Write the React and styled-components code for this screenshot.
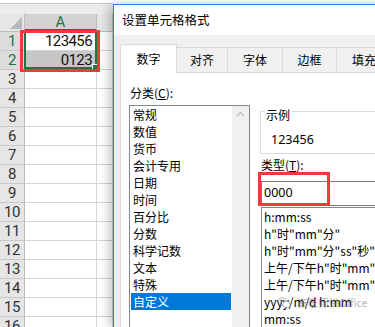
import React from 'react';
import styled, { createGlobalStyle } from 'styled-components';

const GlobalStyle = createGlobalStyle`
  html, body {
    margin: 0;
    padding: 0;
    background: #fff;
  }
  body {
    font-family: "Noto Sans CJK SC", "Noto Sans", sans-serif;
    color: #000;
  }
`;

const Screen = styled.div`
  position: relative;
  width: 375px;
  height: 327px;
  overflow: hidden;
  display: flex;
  background: #fff;
`;

/* ---------- spreadsheet ---------- */

const Sheet = styled.div`
  position: relative;
  flex: 0 0 113px;
  font-family: Roboto, "Liberation Sans", sans-serif;
  background: #fff;
`;

const TopStrip = styled.div`
  height: 3px;
  background: #fff;
  border-bottom: 1px solid #c8c8c8;
`;

const HeaderGap = styled.div`
  height: 10px;
  background: #ececec;
`;

const HeaderRow = styled.div`
  display: flex;
  height: 17px;
  background: #e6e6e6;
  border-bottom: 1px solid #bdbdbd;
`;

const Corner = styled.div`
  position: relative;
  width: 25px;
  border-right: 1px solid #bdbdbd;
  box-sizing: border-box;
  &::after {
    content: '';
    position: absolute;
    right: 2px;
    bottom: 2px;
    border-left: 12px solid transparent;
    border-bottom: 12px solid #b9b9b9;
  }
`;

const ColHead = styled.div`
  width: ${p => p.$w};
  flex: ${p => (p.$w ? 'none' : 1)};
  box-sizing: border-box;
  border-right: 1px solid #bdbdbd;
  background: ${p => (p.$selected ? '#d2d2d2' : '#e6e6e6')};
  color: ${p => (p.$selected ? '#217346' : '#444')};
  border-bottom: ${p => (p.$selected ? '2px solid #217346' : 'none')};
  text-align: center;
  font-size: 15px;
  line-height: 17px;
`;

const Row = styled.div`
  display: flex;
  height: 19px;
`;

const RowHead = styled.div`
  width: 25px;
  box-sizing: border-box;
  border-right: 1px solid #bdbdbd;
  border-bottom: 1px solid #c9c9c9;
  background: ${p => (p.$selected ? '#dcdcdc' : '#e6e6e6')};
  color: ${p => (p.$selected ? '#217346' : '#333')};
  font-size: 15px;
  line-height: 19px;
  text-align: center;
  letter-spacing: -0.5px;
`;

const Cell = styled.div`
  width: ${p => p.$w};
  flex: ${p => (p.$w ? 'none' : 1)};
  box-sizing: border-box;
  border-right: 1px solid #d4d4d4;
  border-bottom: 1px solid #d4d4d4;
  background: ${p => (p.$shade ? '#c6c6c6' : '#fff')};
  text-align: right;
  padding-right: 4px;
  font-size: 15px;
  line-height: 19px;
  letter-spacing: -0.6px;
  color: #111;
`;

const Selection = styled.div`
  position: absolute;
  left: 24px;
  top: 31px;
  width: 73px;
  height: 38px;
  box-sizing: border-box;
  border: 2px solid #217346;
  &::after {
    content: '';
    position: absolute;
    right: -4px;
    bottom: -4px;
    width: 5px;
    height: 5px;
    background: #217346;
    border: 1px solid #fff;
  }
`;

const RedMark = styled.div`
  position: absolute;
  left: ${p => p.$left}px;
  top: ${p => p.$top}px;
  width: ${p => p.$w}px;
  height: ${p => p.$h}px;
  box-sizing: border-box;
  border: 3px solid #f03a3a;
  pointer-events: none;
  z-index: 3;
`;

/* ---------- dialog ---------- */

const Dialog = styled.div`
  position: relative;
  z-index: 1;
  flex: 0 0 300px;
  margin-top: 4px;
  border-top: 1px solid #2b7bd6;
  border-left: 1px solid #2b7bd6;
  box-shadow: -4px 0 10px rgba(0, 0, 0, 0.22);
  background: #f0f0f0;
  display: flex;
  flex-direction: column;
`;

const TitleBar = styled.div`
  height: 30px;
  background: #fff;
  padding-left: 8px;
  font-size: 12.5px;
  line-height: 30px;
`;

const Body = styled.div`
  padding: 9px 0 0 6px;
`;

const Tabs = styled.div`
  display: flex;
  align-items: flex-end;
  height: 28px;
`;

const Tab = styled.div`
  position: relative;
  z-index: ${p => (p.$active ? 2 : 1)};
  width: ${p => p.$w}px;
  height: ${p => (p.$active ? 29 : 25)}px;
  margin-bottom: ${p => (p.$active ? -1 : 0)}px;
  margin-right: -1px;
  box-sizing: border-box;
  border: 1px solid #d9d9d9;
  border-bottom: none;
  background: ${p => (p.$active ? '#fff' : '#f0f0f0')};
  font-size: 12px;
  line-height: ${p => (p.$active ? 27 : 24)}px;
  text-align: center;
  flex-shrink: 0;
`;

const Panel = styled.div`
  display: flex;
  gap: 10px;
  height: 300px;
  padding: 11px 0 0 8px;
  background: #fff;
  border: 1px solid #d9d9d9;
`;

const LeftCol = styled.div`
  flex: 0 0 121px;
`;

const RightCol = styled.div`
  flex: 0 0 170px;
  margin-top: 16px;
`;

const Label = styled.div`
  font-size: 12px;
  line-height: 17px;
  padding-left: 1px;
  margin-top: ${p => p.$mt || 0}px;
  margin-bottom: ${p => p.$mb || 0}px;
  u {
    text-decoration: underline;
  }
`;

const ListBox = styled.div`
  display: flex;
  height: 240px;
  border: 1px solid #828790;
  background: #fff;
`;

const Items = styled.div`
  flex: 1;
`;

const Item = styled.div`
  height: 17px;
  line-height: 17px;
  margin: 0 1px;
  padding-left: 2px;
  font-size: 12px;
  background: ${p => (p.$selected ? '#0078d7' : 'transparent')};
  color: ${p => (p.$selected ? '#fff' : '#000')};
  white-space: nowrap;
`;

const ScrollBar = styled.div`
  flex: 0 0 17px;
  background: #f0f0f0;
  display: flex;
  justify-content: center;
  padding-top: 5px;
`;

const Group = styled.fieldset`
  margin: 0;
  padding: 0 0 5px 4px;
  border: 1px solid #dcdcdc;
  min-width: 0;
`;

const Legend = styled.legend`
  padding: 6px 1px 0;
  font-size: 12px;
  line-height: 17px;
`;

const Sample = styled.div`
  margin-top: 8px;
  padding-left: 6px;
  font-family: "Noto Sans", "Liberation Sans", sans-serif;
  font-size: 12.5px;
  line-height: 17px;
`;

const TypeField = styled.div`
  position: relative;
  margin: 8px 0 0 1px;
`;

const TypeInput = styled.div`
  height: 25px;
  box-sizing: border-box;
  border: 1px solid #7a7a7a;
  padding-left: 2px;
  font-family: "Noto Sans", "Liberation Sans", sans-serif;
  font-size: 12.5px;
  line-height: 22px;
  background: #fff;
`;

const TypeList = styled.div`
  margin: 1px 0 0 1px;
  height: 160px;
  border: 1px solid #828790;
`;

const TypeItem = styled.div`
  height: 17px;
  line-height: 17px;
  padding-left: 2px;
  font-size: 12px;
  white-space: nowrap;
`;

const Watermark = styled.div`
  position: absolute;
  left: 277px;
  top: 295px;
  display: flex;
  align-items: center;
  gap: 6px;
  font-size: 10.5px;
  color: rgba(110, 110, 110, 0.55);
  z-index: 4;
  pointer-events: none;
`;

const categories = [
  '常规', '数值', '货币', '会计专用', '日期', '时间',
  '百分比', '分数', '科学记数', '文本', '特殊', '自定义',
];

const formats = [
  'h:mm:ss',
  'h"时"mm"分"',
  'h"时"mm"分"ss"秒"',
  '上午/下午h"时"mm"分"',
  '上午/下午h"时"mm"分"ss"秒"',
  'yyyy/m/d h:mm',
  'mm:ss',
];

const tabs = [
  { name: '数字', w: 57, active: true },
  { name: '对齐', w: 52 },
  { name: '字体', w: 56 },
  { name: '边框', w: 55 },
  { name: '填充', w: 56 },
];

const cellValues = { 1: '123456', 2: '0123' };

const WeChatIcon = () => (
  <svg width="14" height="12" viewBox="0 0 14 12" fill="none" stroke="rgba(110,110,110,0.6)" strokeWidth="0.9">
    <ellipse cx="5.2" cy="4.6" rx="4.6" ry="3.8" />
    <ellipse cx="9.4" cy="7.4" rx="3.9" ry="3.2" fill="#fff" />
    <circle cx="3.6" cy="3.6" r="0.5" fill="rgba(110,110,110,0.6)" />
    <circle cx="6.6" cy="3.6" r="0.5" fill="rgba(110,110,110,0.6)" />
  </svg>
);

const App = () => (
  <>
    <GlobalStyle />
    <Screen>
      <Sheet>
        <TopStrip />
        <HeaderGap />
        <HeaderRow>
          <Corner />
          <ColHead $w="72px" $selected>A</ColHead>
          <ColHead />
        </HeaderRow>
        {Array.from({ length: 16 }, (_, i) => i + 1).map(n => (
          <Row key={n}>
            <RowHead $selected={n <= 2}>{n}</RowHead>
            <Cell $w="72px" $shade={n === 2}>{cellValues[n]}</Cell>
            <Cell />
          </Row>
        ))}
        <Selection />
        <RedMark $left={20} $top={30} $w={80} $h={42} />
      </Sheet>

      <Dialog>
        <TitleBar>设置单元格格式</TitleBar>
        <Body>
          <Tabs>
            {tabs.map(t => (
              <Tab key={t.name} $w={t.w} $active={t.active}>{t.name}</Tab>
            ))}
          </Tabs>
          <Panel>
            <LeftCol>
              <Label $mb={4}>分类(<u>C</u>):</Label>
              <ListBox>
                <Items>
                  {categories.map(c => (
                    <Item key={c} $selected={c === '自定义'}>{c}</Item>
                  ))}
                </Items>
                <ScrollBar>
                  <svg width="9" height="6" viewBox="0 0 9 6">
                    <path d="M0.8 5.2 L4.5 1.5 L8.2 5.2" fill="none" stroke="#c2c2c2" strokeWidth="1.3" />
                  </svg>
                </ScrollBar>
              </ListBox>
            </LeftCol>
            <RightCol>
              <Group>
                <Legend>示例</Legend>
                <Sample>123456</Sample>
              </Group>
              <Label $mt={2}>类型(<u>T</u>):</Label>
              <TypeField>
                <TypeInput>0000</TypeInput>
                <RedMark $left={-3} $top={-9} $w={72} $h={34} />
              </TypeField>
              <TypeList>
                {formats.map(f => (
                  <TypeItem key={f}>{f}</TypeItem>
                ))}
              </TypeList>
            </RightCol>
          </Panel>
        </Body>
      </Dialog>

      <Watermark>
        <WeChatIcon />
        <span>秦老师讲Office</span>
      </Watermark>
    </Screen>
  </>
);

export default App;
